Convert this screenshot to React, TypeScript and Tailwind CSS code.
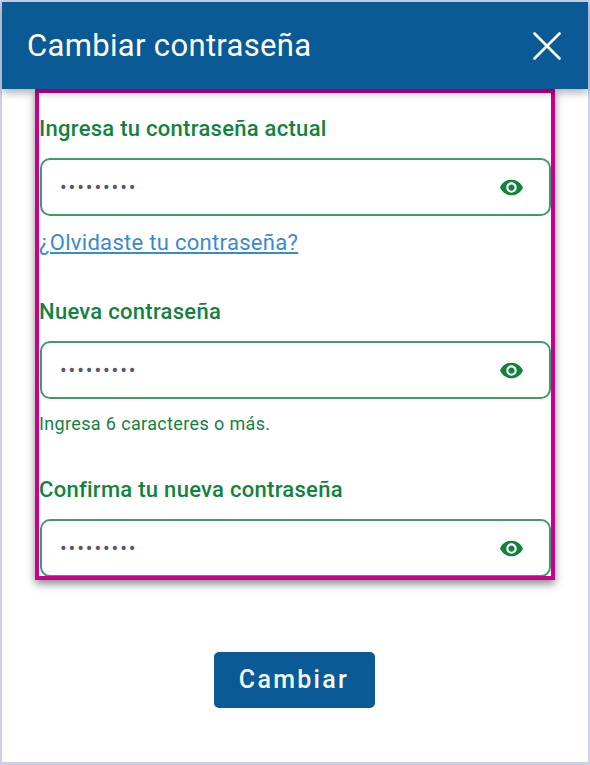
import { X } from "lucide-react";

function EyeIcon() {
  return (
    <svg width="25" height="25" viewBox="0 0 24 24" fill="#12823f" aria-hidden="true">
      <path d="M12 4.5C7 4.5 2.73 7.61 1 12c1.73 4.39 6 7.5 11 7.5s9.27-3.11 11-7.5c-1.73-4.39-6-7.5-11-7.5zM12 17c-2.76 0-5-2.24-5-5s2.24-5 5-5 5 2.24 5 5-2.24 5-5 5zm0-8c-1.66 0-3 1.34-3 3s1.34 3 3 3 3-1.34 3-3-1.34-3-3-3z" />
    </svg>
  );
}

function PasswordInput() {
  return (
    <div className="flex h-[58px] w-[511px] shrink-0 items-center justify-between rounded-[10px] border-2 border-[#3f9b68] bg-white pl-[18px] pr-[25px]">
      <span className="text-[20px] leading-none tracking-[1.85px] text-[#5b5668]">
        •••••••••
      </span>
      <EyeIcon />
    </div>
  );
}

function FieldLabel({ children }: { children: string }) {
  return (
    <label className="block text-[22px] leading-[24px] font-medium tracking-[0.28px] text-[#12823f]">
      {children}
    </label>
  );
}

export default function App() {
  return (
    <div className="flex h-[765px] w-[590px] flex-col border-2 border-b-[3px] border-[#cfcfe8] bg-white font-['Roboto',sans-serif]">
      <header className="relative z-10 flex h-[87px] shrink-0 items-center justify-between bg-[#0a5a96] pl-[25px] pr-[16px] shadow-[0_4px_8px_rgba(0,0,0,0.3)]">
        <h1 className="text-[31px] leading-none font-normal tracking-[0.33px] text-white">Cambiar contraseña</h1>
        <X className="h-[50px] w-[50px] text-white" strokeWidth={1.3} />
      </header>

      <div className="ml-[33px] flex h-[491px] w-[520px] shrink-0 flex-col overflow-hidden border-[4.5px] border-[#c8008f] bg-white shadow-[0_4px_8px_rgba(0,0,0,0.45)]">
        <div className="pt-[24px]">
          <FieldLabel>Ingresa tu contraseña actual</FieldLabel>
        </div>
        <div className="mt-[17px] pl-px">
          <PasswordInput />
        </div>
        <a className="mt-[15px] text-[22px] leading-[24px] tracking-[0.3px] text-[#3a8ad0] underline">
          ¿Olvidaste tu contraseña?
        </a>
        <div className="mt-[45px]">
          <FieldLabel>Nueva contraseña</FieldLabel>
        </div>
        <div className="mt-[17px] pl-px">
          <PasswordInput />
        </div>
        <p className="mt-[15px] text-[18px] leading-[20px] tracking-[0.36px] text-[#12823f]">
          Ingresa 6 caracteres o más.
        </p>
        <div className="mt-[44px]">
          <FieldLabel>Confirma tu nueva contraseña</FieldLabel>
        </div>
        <div className="mt-[17px] pl-px">
          <PasswordInput />
        </div>
      </div>

      <div className="flex justify-center pt-[72px] pr-[2px]">
        <button className="h-[56px] w-[161px] rounded-[5px] bg-[#0a5a96] text-[25px] font-medium tracking-[2.3px] text-[#f0f6fb]">
          Cambiar
        </button>
      </div>
    </div>
  );
}
